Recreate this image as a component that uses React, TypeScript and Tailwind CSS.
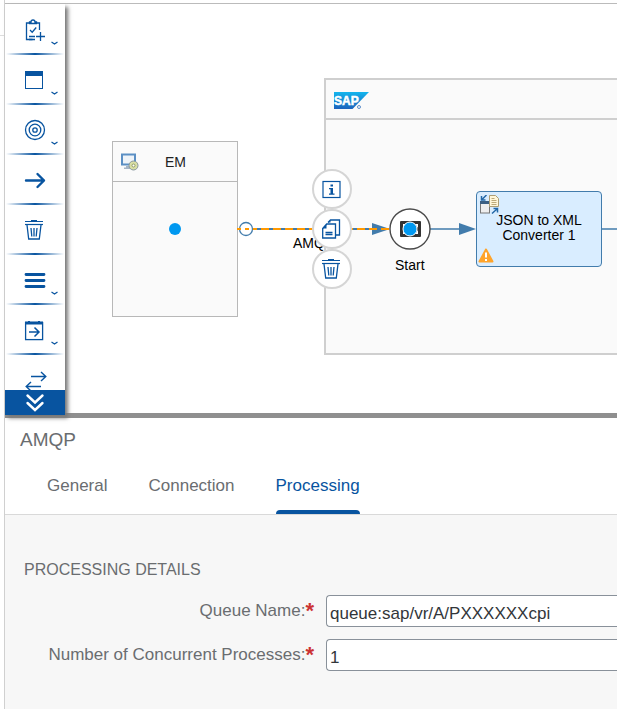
import { useState, type ReactNode } from "react";

const BLUE = "#0854a0";

function Trash() {
  return (
    <g fill="none" stroke={BLUE} strokeWidth="1.3">
      <path d="M0 1.500h18" strokeWidth="1" />
      <path d="M6 .7h6" strokeWidth="1.400" />
      <path d="M0 4.500h18" strokeWidth="1.200" />
      <path d="M2 5l1.700 14h10.600L16 5" />
      <path d="M6 8l.8 8.500M9 8v8.500M12 8l-.8 8.500" />
    </g>
  );
}

type Tool = { name: string; menu: boolean; icon: ReactNode };

const tools: Tool[] = [
  {
    name: "Add participant",
    menu: true,
    icon: (
      <g fill="none" stroke={BLUE} strokeWidth="1.300">
        <path d="M25 18h-3.500v16.500h6M34.500 25V18h-3" />
        <path d="M24.500 18.500v-1.500h1.500a2 2 0 0 1 4 0h1.500v1.500z" />
        <path d="M25 25l2.200 2.200 4-4.700M24 31.500h6M24 34.500h6M31 31.500h9M35.500 27v9" />
      </g>
    ),
  },
  {
    name: "Process",
    menu: true,
    icon: (
      <g>
        <rect x="20.500" y="16.500" width="17" height="17" fill="none" stroke={BLUE} />
        <path d="M20 16h18v5H20z" fill={BLUE} />
      </g>
    ),
  },
  {
    name: "Events",
    menu: true,
    icon: (
      <g fill="none" stroke={BLUE} strokeWidth="1.300">
        <circle cx="30" cy="25" r="9.500" />
        <circle cx="30" cy="25" r="5.800" />
        <circle cx="30" cy="25" r="2.200" />
      </g>
    ),
  },
  {
    name: "Connector",
    menu: false,
    icon: (
      <path d="M21 25.500h18M32.500 19l6.500 6.500-6.500 6.500" fill="none" stroke={BLUE} strokeWidth="2.400" strokeLinecap="round" strokeLinejoin="round" />
    ),
  },
  {
    name: "Delete",
    menu: false,
    icon: (
      <g transform="translate(20 15)">
        <Trash />
      </g>
    ),
  },
  {
    name: "Mapping",
    menu: true,
    icon: (
      <path d="M21 19.500h18M21 25.500h18M21 31.500h18" stroke={BLUE} strokeWidth="2.800" strokeLinecap="round" />
    ),
  },
  {
    name: "Call",
    menu: true,
    icon: (
      <g fill="none" stroke={BLUE} strokeWidth="1.300">
        <rect x="20.600" y="17.600" width="17" height="17" />
        <path d="M20 18h18" strokeWidth="3" />
        <path d="M24 16v1M34 16v1" strokeWidth="2" />
        <path d="M24 27h9.500M29.500 22.500l4.500 4.500-4.500 4.500" strokeWidth="1.500" />
      </g>
    ),
  },
  {
    name: "Routing",
    menu: false,
    icon: (
      <path d="M26 21.500h14.500M36 17l4.800 4.500L36 26M36 31.500H21.500M26 27l-4.800 4.500L26 36" fill="none" stroke={BLUE} strokeWidth="1.400" />
    ),
  },
];

function Palette() {
  return (
    <nav aria-label="Palette" className="z-20 flex w-15 shrink-0 flex-col bg-white shadow-[3px_3px_4px_#777]">
      <div className="h-[386px] overflow-hidden pt-px">
        {tools.map((tool) => (
          <button key={tool.name} type="button" aria-label={tool.name} className="block h-[50px] w-full">
            <svg width="60" height="50" viewBox="0 0 60 50" aria-hidden="true">
              {tool.icon}
              {tool.menu && <path d="M46.500 37l3 2 3-2" fill="none" stroke={BLUE} strokeWidth="1.200" />}
              <rect x="1" y="48" width="58" height="2" fill="url(#divider)" />
            </svg>
          </button>
        ))}
      </div>
      <button type="button" aria-label="More tools" className="flex h-[25px] items-center justify-center bg-[#0854a0]">
        <svg width="20" height="20" viewBox="0 0 20 20" aria-hidden="true">
          <path d="M2.500 2.500l7.500 7 7.500-7M2.500 10l7.500 7 7.500-7" fill="none" stroke="#fff" strokeWidth="2.400" strokeLinecap="round" />
        </svg>
      </button>
      <svg width="0" height="0" className="absolute" aria-hidden="true">
        <defs>
          <linearGradient id="divider">
            <stop offset="0" stopColor={BLUE} stopOpacity="0" />
            <stop offset=".5" stopColor={BLUE} />
            <stop offset="1" stopColor={BLUE} stopOpacity="0" />
          </linearGradient>
        </defs>
      </svg>
    </nav>
  );
}

function RoundAction({ label, children }: { label: string; children: ReactNode }) {
  return (
    <button type="button" aria-label={label} className="flex size-10 items-center justify-center rounded-full border-2 border-[#d5d5d5] bg-white">
      <svg width="20" height="20" viewBox="0 0 20 20" aria-hidden="true">
        {children}
      </svg>
    </button>
  );
}

function Canvas() {
  return (
    <main className="relative min-w-0 flex-1 overflow-hidden bg-white font-['Liberation_Sans',Arial,sans-serif] text-sm text-black">
      <section className="absolute top-[137px] left-[47px] h-[176px] w-[126px] border border-[#b8b8b8] bg-[#fafafa]">
        <header className="flex h-10 items-center border-b border-[#b8b8b8] pl-2">
          <svg width="18" height="18" viewBox="0 0 18 18" aria-hidden="true">
            <rect x="1" y="1.500" width="13" height="10" fill="#eef3f8" stroke="#5b8fc4" strokeWidth="2" />
            <path d="M5 13h5v1.500h2V16H3v-1.500h2z" fill="#a5b5c5" />
            <circle cx="12.500" cy="12.500" r="4.500" fill="#d9dfa4" stroke="#8796a0" />
            <circle cx="12.500" cy="12.500" r="1.500" fill="#fff" stroke="#929b68" />
          </svg>
          <span className="ml-[26px] text-[#222]">EM</span>
        </header>
      </section>

      <section className="absolute top-[74px] -right-10 left-[259px] h-[277px] border-2 border-[#cfcfcf] bg-[#fafafa]">
        <header className="flex h-10 items-center border-b-2 border-[#cfcfcf] pt-1 pl-2">
          <svg width="36" height="18" viewBox="0 0 36 18" role="img" aria-label="SAP">
            <defs>
              <linearGradient id="sap" x1="0" y1="0" x2="0" y2="1">
                <stop stopColor="#13b5ed" />
                <stop offset="1" stopColor="#1c63bd" />
              </linearGradient>
            </defs>
            <path d="M0 0h35L18.500 17H0z" fill="url(#sap)" />
            <text x="0" y="13" fill="#fff" stroke="#fff" strokeWidth=".5" fontSize="12" fontWeight="700" fontFamily="Liberation Sans">SAP</text>
            <circle cx="25" cy="15" r="1.500" fill="none" stroke="#5f8fca" />
          </svg>
        </header>
      </section>

      <svg className="absolute inset-0 size-full" aria-hidden="true">
        <circle cx="110" cy="225" r="6" fill="#0098f0" />
        <circle cx="181" cy="225" r="6.500" fill="#fff" stroke="#427cac" strokeWidth="1.300" />
        <path d="M188 225h120" stroke="#427cac" strokeWidth="2" />
        <path d="M307 219l18 6-18 6z" fill="#427cac" />
        <path d="M172 225h4M180 225h4" stroke="#ff9900" strokeWidth="2" />
        <path d="M188 225h137" stroke="#ff9900" strokeWidth="2" strokeDasharray="8 4" strokeDashoffset="4" />
        <path d="M365 225h35M537 225h15" stroke="#427cac" strokeWidth="1.300" />
        <path d="M394 219l17 6-17 6z" fill="#427cac" />
        <circle cx="345" cy="225" r="20" fill="#fff" stroke="#4a4a4a" strokeWidth="1.400" />
        <rect x="335" y="217" width="21" height="16" rx="1" fill="#333" />
        <path d="M338 220h3l-3 4zM353 220h-3l3 4zM338 230h3l-3-4zM353 230h-3l3-4z" fill="#fff" />
        <circle cx="345" cy="225" r="7" fill="#0098f0" stroke="#fff" strokeWidth="1" />
      </svg>

      <span className="absolute top-[229px] left-[228px] leading-5">AMQP</span>
      <span className="absolute top-[251px] left-[330px] leading-5">Start</span>

      <section className="absolute top-[187px] left-[411px] h-[76px] w-[126px] rounded-sm border border-[#427cac] bg-[#d9edff] pt-[21px] text-center leading-[15px]">
        JSON to XML
        <br />
        Converter 1
        <svg className="absolute top-[3px] left-[3px]" width="20" height="20" viewBox="0 0 20 20" aria-hidden="true">
          <rect x=".5" y="7" width="9" height="11" fill="#eee" stroke="#777" />
          <path d="M0 6h10v3H0z" fill="#3b5f82" />
          <path d="M9.500.5h6l3 3v8h-9z" fill="#fff6d8" stroke="#ad9e75" />
          <path d="M11.500 3.500h3M11.500 5.500h5M11.500 7.500h5M11.500 9.500h5" stroke="#bca979" />
          <path d="M6.500 0L2 4.500M1.500 1v4h4M12 18.500l5-4.500M13.500 13.500h4v4" fill="none" stroke="#2368a8" strokeWidth="1.500" />
        </svg>
        <svg className="absolute bottom-[3px] left-px" width="16" height="15" viewBox="0 0 16 15" aria-hidden="true">
          <path d="M8 1.500L1.500 13.500h13z" fill="#ffa42b" stroke="#ffa42b" strokeWidth="2" strokeLinejoin="round" />
          <path d="M8 4.500v5M8 11v2" stroke="#fff" strokeWidth="2" />
        </svg>
      </section>

      <div className="absolute top-[165px] left-[247px] flex flex-col">
        <RoundAction label="Information">
          <rect x="1" y="2.500" width="17" height="16" fill="none" stroke={BLUE} strokeWidth="1.200" />
          <path d="M8.500 5.500H11v2H8.500zM7 9h4v5.500h1.500v1.200H7v-1.200h1.500v-4.300H7z" fill={BLUE} />
        </RoundAction>
        <RoundAction label="Copy">
          <g fill="none" stroke={BLUE} strokeWidth="1.300">
            <path d="M6 3.500L8.500 1h9v15H14" />
            <path d="M.7 9.500l4-4.500h8.800v14H.7z" />
            <path d="M3.500 13.500h7M3.500 15.500h7" />
          </g>
          <path d="M.5 9.500l4-4.500v4.500zM6 3.500L8.500 1v2.500z" fill={BLUE} />
        </RoundAction>
        <RoundAction label="Delete">
          <Trash />
        </RoundAction>
      </div>
    </main>
  );
}

const tabs = ["General", "Connection", "Processing"];

function Field({ id, label, value }: { id: string; label: string; value: string }) {
  return (
    <div className="flex items-center gap-3">
      <label htmlFor={id} className="flex w-[290px] shrink-0 justify-end leading-8 whitespace-nowrap">
        {label}:<span className="text-[22px] font-bold text-[#cc3333]">*</span>
      </label>
      <input id={id} defaultValue={value} className="h-8 min-w-0 flex-1 rounded-l-sm border border-r-0 border-[#89919a] bg-white px-[3px] pt-1.5 text-[#32363a]" />
    </div>
  );
}

function Properties() {
  const [active, setActive] = useState("Processing");
  return (
    <section className="flex flex-1 flex-col bg-[#f7f7f7] text-[17px] text-[#6a6d70]">
      <div className="border-b border-[#d9d9d9] bg-white">
        <h1 className="px-[15px] pt-2 text-[19px] leading-7">AMQP</h1>
        <div role="tablist" className="flex gap-[41px] px-[42px] pt-4">
          {tabs.map((tab) => (
            <button
              key={tab}
              type="button"
              role="tab"
              aria-selected={active === tab}
              onClick={() => setActive(tab)}
              className={
                active === tab
                  ? "flex h-11 flex-col justify-between pt-0.5 leading-7 text-[#0854a0] after:h-1 after:w-full after:rounded-t-sm after:bg-[#0854a0]"
                  : "flex h-11 flex-col pt-0.5 leading-7"
              }
            >
              {tab}
            </button>
          ))}
        </div>
      </div>
      <form className="flex flex-col pt-[41px]">
        <h2 className="pl-[19px] text-base leading-7">PROCESSING DETAILS</h2>
        <div className="mt-[11px] flex flex-col gap-3 pl-[19px]">
          <Field id="queue" label="Queue Name" value="queue:sap/vr/A/PXXXXXXcpi" />
          <Field id="processes" label="Number of Concurrent Processes" value="1" />
        </div>
      </form>
    </section>
  );
}

export default function App() {
  return (
    <div className="flex min-h-screen bg-white font-['Liberation_Sans',Arial,sans-serif]">
      <div className="w-1 shrink-0 pt-[35px]">
        <div className="h-px bg-[#ddd]" />
      </div>
      <div className="flex min-w-0 flex-1 flex-col border-l border-[#d0d0d0] pt-[3px]">
        <div className="flex h-[412px] border-t border-[#bbb]">
          <Palette />
          <Canvas />
        </div>
        <div className="z-10 -mt-0.5 h-[5px] bg-[#8f8f8f]" />
        <Properties />
      </div>
    </div>
  );
}
